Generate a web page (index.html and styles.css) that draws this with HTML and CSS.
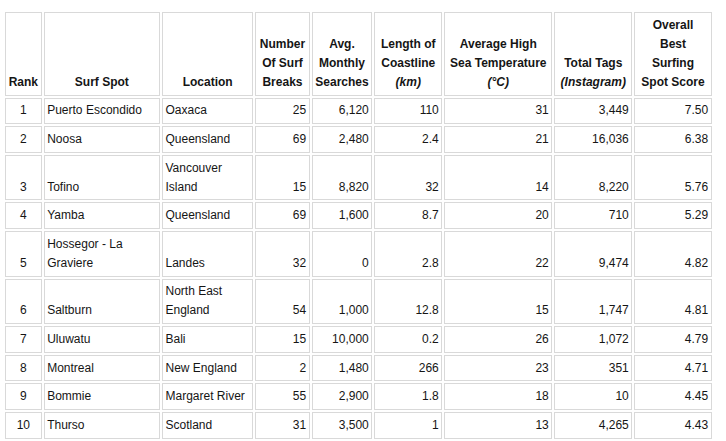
FILE: index.html
```html
<!DOCTYPE html>
<html lang="en">
<head>
<meta charset="utf-8">
<title>Best Surfing Spots</title>
<link rel="stylesheet" href="styles.css">
</head>
<body>
<table class="surf">
  <thead>
    <tr>
      <th class="c-rank">Rank</th>
      <th class="c-spot">Surf Spot</th>
      <th class="c-loc">Location</th>
      <th class="c-breaks">Number<br>Of Surf<br>Breaks</th>
      <th class="c-search">Avg.<br>Monthly<br>Searches</th>
      <th class="c-coast">Length of<br>Coastline<br><i>(km)</i></th>
      <th class="c-temp">Average High<br>Sea Temperature<br><i>(°C)</i></th>
      <th class="c-tags">Total Tags<br><i>(Instagram)</i></th>
      <th class="c-score">Overall<br>Best<br>Surfing<br>Spot Score</th>
    </tr>
  </thead>
  <tbody>
    <tr><td class="rank">1</td><td>Puerto Escondido</td><td>Oaxaca</td><td class="num">25</td><td class="num">6,120</td><td class="num">110</td><td class="num">31</td><td class="num">3,449</td><td class="num">7.50</td></tr>
    <tr><td class="rank">2</td><td>Noosa</td><td>Queensland</td><td class="num">69</td><td class="num">2,480</td><td class="num">2.4</td><td class="num">21</td><td class="num">16,036</td><td class="num">6.38</td></tr>
    <tr><td class="rank">3</td><td>Tofino</td><td>Vancouver Island</td><td class="num">15</td><td class="num">8,820</td><td class="num">32</td><td class="num">14</td><td class="num">8,220</td><td class="num">5.76</td></tr>
    <tr><td class="rank">4</td><td>Yamba</td><td>Queensland</td><td class="num">69</td><td class="num">1,600</td><td class="num">8.7</td><td class="num">20</td><td class="num">710</td><td class="num">5.29</td></tr>
    <tr><td class="rank">5</td><td>Hossegor - La Graviere</td><td>Landes</td><td class="num">32</td><td class="num">0</td><td class="num">2.8</td><td class="num">22</td><td class="num">9,474</td><td class="num">4.82</td></tr>
    <tr><td class="rank">6</td><td>Saltburn</td><td>North East England</td><td class="num">54</td><td class="num">1,000</td><td class="num">12.8</td><td class="num">15</td><td class="num">1,747</td><td class="num">4.81</td></tr>
    <tr><td class="rank">7</td><td>Uluwatu</td><td>Bali</td><td class="num">15</td><td class="num">10,000</td><td class="num">0.2</td><td class="num">26</td><td class="num">1,072</td><td class="num">4.79</td></tr>
    <tr><td class="rank">8</td><td>Montreal</td><td>New England</td><td class="num">2</td><td class="num">1,480</td><td class="num">266</td><td class="num">23</td><td class="num">351</td><td class="num">4.71</td></tr>
    <tr><td class="rank">9</td><td>Bommie</td><td>Margaret River</td><td class="num">55</td><td class="num">2,900</td><td class="num">1.8</td><td class="num">18</td><td class="num">10</td><td class="num">4.45</td></tr>
    <tr><td class="rank">10</td><td>Thurso</td><td>Scotland</td><td class="num">31</td><td class="num">3,500</td><td class="num">1</td><td class="num">13</td><td class="num">4,265</td><td class="num">4.43</td></tr>
  </tbody>
</table>
</body>
</html>
```
FILE: styles.css
```css
html, body {
  margin: 0;
  background: #ffffff;
}

body {
  padding: 10px 0 0 3px;
  font-family: "Liberation Sans", Arial, Helvetica, sans-serif;
  font-size: 12px;
  line-height: 19px;
  color: #151515;
}

.surf {
  table-layout: fixed;
  width: 710.7px;
  border-collapse: separate;
  border-spacing: 2px;
}

.surf th,
.surf td {
  box-sizing: border-box;
  border: 1px solid #d9d9d9;
  padding: 2.8px 2.5px;
  vertical-align: bottom;
}

.surf td {
  text-align: left;
}

.surf th {
  font-weight: bold;
  text-align: center;
  white-space: nowrap;
}

.surf th i {
  font-style: italic;
}

.surf td.rank { text-align: center; }
.surf td.num { text-align: right; }

.c-rank   { width: 36.7px; }
.c-spot   { width: 116.3px; }
.c-loc    { width: 91.3px; }
.c-breaks { width: 54.4px; }
.c-search { width: 60.6px; }
.c-coast  { width: 68px; }
.c-temp   { width: 108px; }
.c-tags   { width: 78px; }
.c-score  { width: 77.4px; }
```
